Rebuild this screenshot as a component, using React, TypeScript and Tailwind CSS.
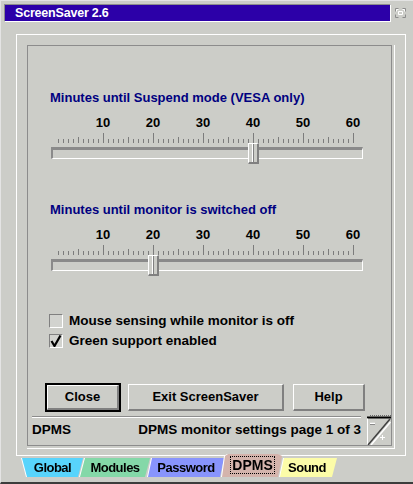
import { memo } from "react";

const TICKS = Array.from({ length: 60 }, (_, i) => i + 1);
const MARKS = [10, 20, 30, 40, 50, 60];

interface SliderProps {
    label: string;
    value: number;
}

function Slider({ label, value }: SliderProps) {
    return (
        <div className="flex flex-col pl-[22px]">
            <div className="h-4 text-[13px] leading-4 font-bold text-[#000080]">{label}</div>
            <div className="mt-[9px] flex h-4 pl-[28px] text-[13px] leading-4 font-bold text-black">
                {MARKS.map((n) => (
                    <span key={n} className="w-[50px] shrink-0 text-center">
                        {n}
                    </span>
                ))}
            </div>
            <div className="mt-[2px] flex h-[10px] items-end gap-[4px] pl-[8px]">
                {TICKS.map((t) => (
                    <div
                        key={t}
                        className={
                            t % 10 === 0
                                ? "h-[10px] w-px shrink-0 bg-[#7c7c7c]"
                                : t % 5 === 0
                                  ? "h-[6px] w-px shrink-0 bg-[#7c7c7c]"
                                  : "h-[4px] w-px shrink-0 bg-[#7c7c7c]"
                        }
                    />
                ))}
            </div>
            <div className="relative mt-[4px] ml-px h-[12px] w-[312px] border-t-[3px] border-l-2 border-t-[#8a8a8a] border-l-[#8a8a8a] border-r border-b border-r-white border-b-white">
                {/* thumb */}
                <div
                    className="absolute top-[-7px] flex h-[21px] w-[11px] justify-center border-t border-l border-white border-r-2 border-b-2 border-r-[#808080] border-b-[#808080] bg-[#cccdc8]"
                    style={{ left: value * 5 - 5 }}
                >
                    <div className="h-full w-[2px] border-l border-l-white border-r border-r-[#808080]" />
                </div>
            </div>
        </div>
    );
}

function CheckBox({ label, checked }: { label: string; checked: boolean }) {
    return (
        <div className="flex h-5 items-center pl-[21px]">
            <div className="h-[14px] w-[14px] border-t border-l border-[#808080] border-r border-b border-r-white border-b-white bg-[#d2d3cf]">
                {checked && (
                    <svg width="12" height="12" viewBox="0 0 12 12">
                        <path d="M1.5 6 L4.5 11 L10.5 0.5" fill="none" stroke="#000" strokeWidth="2.2" />
                    </svg>
                )}
            </div>
            <span className="ml-[6px] text-[13.5px] leading-5 font-bold text-black">{label}</span>
        </div>
    );
}

function PageTurner() {
    return (
        <svg width="26" height="30" viewBox="0 0 26 30" className="shrink-0">
            <path d="M5 0.5H26" stroke="#6a6a6a" strokeDasharray="1 1" />
            <path d="M2 2.5H26" stroke="#000" strokeWidth="2" />
            <path d="M2.5 3.5V30" stroke="#ffffff" />
            <path d="M25 4 L3 30" stroke="#404040" strokeWidth="1.5" />
            <path d="M25.5 7 L6 30" stroke="#ffffff" strokeWidth="1.5" />
            <path d="M5 8.5H10" stroke="#ffffff" strokeWidth="1.5" />
            <path d="M5 9.5H10" stroke="#8a8a8a" />
            <path d="M15 22.5H20 M17.5 20V25" stroke="#ffffff" />
        </svg>
    );
}

function App() {
    return (
        <div className="h-[484px] w-[413px] overflow-hidden border-t border-l border-[#e4e4e4] border-b-2 border-b-[#3c3c3c] bg-[#cccdc8] font-['Liberation_Sans',Arial,sans-serif]">
            {/* title row */}
            <div className="flex items-start pt-[3px] pl-[3px]">
                <div className="flex h-[18px] w-[387px] items-center border-t border-l border-[#8c8c8c] border-r border-b border-r-white border-b-white bg-[#2c00a8] pl-[10px]">
                    <span className="text-[12.5px] leading-4 font-bold tracking-[-0.2px] text-white">ScreenSaver 2.6</span>
                </div>
                <svg width="11" height="10" viewBox="0 0 11 10" className="mt-[4px] ml-[4px]">
                    <path d="M0.5 3.5V0.5H3.5 M7.5 0.5H10.5V3.5 M10.5 6.5V9.5H7.5 M3.5 9.5H0.5V6.5" fill="none" stroke="#8c8c8c" />
                    <path d="M1.5 3.5V1.5H3.5 M7.5 1.5H9.5V3.5 M3.5 3.5H7.5V6.5H3.5Z" fill="none" stroke="#ffffff" />
                </svg>
            </div>

            {/* notebook */}
            <div className="mt-[12px] ml-[15px] h-[422px] w-[390px] border border-white pt-[10px] pl-[10px]">
                <div className="h-[404px] w-[368px] border-r border-b border-white pr-[2px] pb-[2px]">
                    <div className="flex h-[401px] w-[365px] flex-col border border-[#8c8c8c]">
                        <div className="mt-[44px]">
                            <Slider label="Minutes until Suspend mode (VESA only)" value={40} />
                        </div>
                        <div className="mt-[43px]">
                            <Slider label="Minutes until monitor is switched off" value={20} />
                        </div>

                        <div className="mt-[40px] flex flex-col">
                            <CheckBox label="Mouse sensing while monitor is off" checked={false} />
                            <CheckBox label="Green support enabled" checked={true} />
                        </div>

                        <div className="mt-[32px] flex h-[29px] items-center pl-[17px] text-[13px] font-bold text-black">
                            <div className="h-[29px] w-[76px] border-2 border-black">
                                <div className="flex h-full items-center justify-center border-t border-l border-white border-r-2 border-b-2 border-r-[#808080] border-b-[#808080]">
                                    Close
                                </div>
                            </div>
                            <div className="ml-[7px] flex h-[27px] w-[156px] items-center justify-center border-t border-l border-white border-r-2 border-b-2 border-r-[#808080] border-b-[#808080]">
                                Exit ScreenSaver
                            </div>
                            <div className="ml-[9px] flex h-[27px] w-[72px] items-center justify-center border-t border-l border-white border-r-2 border-b-2 border-r-[#808080] border-b-[#808080]">
                                Help
                            </div>
                        </div>

                        <div className="mt-[3px] flex h-[30px]">
                            <div className="ml-[4px] flex w-[329px] flex-col pt-px">
                                <div className="h-px bg-[#8c8c8c]" />
                                <div className="h-px bg-white" />
                                <div className="flex flex-1 items-center justify-between pb-[2px] text-[13.5px] font-bold text-black">
                                    <span>DPMS</span>
                                    <span>DPMS monitor settings page 1 of 3</span>
                                </div>
                            </div>
                            <div className="ml-auto">
                                <PageTurner />
                            </div>
                        </div>
                    </div>
                </div>
            </div>

            {/* tabs */}
            <div className="-mt-[2px] flex h-[23px] items-end pl-[21px] text-[13px] font-bold tracking-[-0.5px] text-black">
                <div className="[filter:drop-shadow(-1px_0_0_#ffffff)]">
                    <div className="flex h-[19px] w-[61px] items-center justify-center bg-[#58d4fc] [clip-path:polygon(0_0,61px_0,56px_100%,5px_100%)]">
                        Global
                    </div>
                </div>
                <div className="-ml-[3px] [filter:drop-shadow(-1px_0_0_#ffffff)]">
                    <div className="flex h-[19px] w-[70px] items-center justify-center bg-[#84d8a8] [clip-path:polygon(5px_0,70px_0,65px_100%,0_100%)]">
                        Modules
                    </div>
                </div>
                <div className="-ml-[2px] [filter:drop-shadow(-1px_0_0_#ffffff)]">
                    <div className="flex h-[19px] w-[76px] items-center justify-center bg-[#8894fc] [clip-path:polygon(4px_0,76px_0,72px_100%,0_100%)]">
                        Password
                    </div>
                </div>
                <div className="relative z-10 -ml-[2px] [filter:drop-shadow(-1px_0_0_#ffffff)]">
                    <div className="flex h-[23px] w-[61px] items-center justify-center bg-[#d4b4ac] pb-[1px] [clip-path:polygon(3px_2px,6px_0,56px_0,60px_2px,56px_100%,0_100%)]">
                        <span className="border border-dotted border-black px-[1px] text-[14px] leading-[16px] tracking-normal">DPMS</span>
                    </div>
                </div>
                <div className="-ml-[3px] [filter:drop-shadow(-1px_0_0_#ffffff)]">
                    <div className="flex h-[19px] w-[57px] items-center justify-center bg-[#fcfca8] pr-[3px] [clip-path:polygon(4px_0,57px_0,52px_100%,0_100%)]">
                        Sound
                    </div>
                </div>
            </div>
        </div>
    );
}

export default memo(App);
